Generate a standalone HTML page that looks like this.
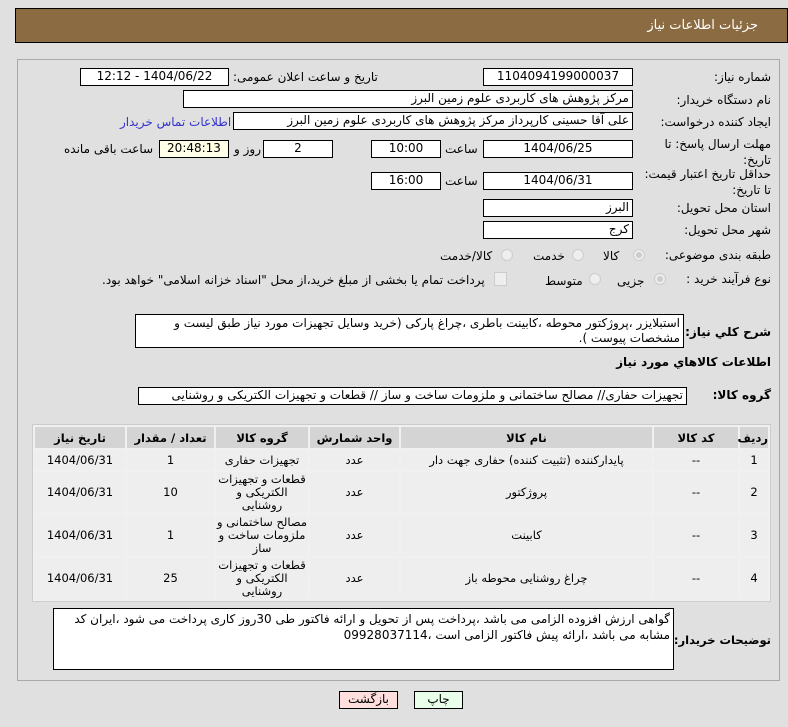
<!DOCTYPE html>
<html><head><meta charset="utf-8"><style>
body{margin:0;width:788px;height:727px;background:#e0e0e0;font-family:"DejaVu Sans","Liberation Sans",sans-serif;font-size:12px;color:#000;position:relative;overflow:hidden}
.a{position:absolute;white-space:nowrap;direction:rtl;font-size:12px}
.b{position:absolute;background:#fff;border:1px solid #000;box-sizing:border-box;direction:rtl;font-size:12px;line-height:15px;padding:0 3px;white-space:nowrap;overflow:hidden}
.c{text-align:center}
.r{position:absolute;width:12px;height:12px;border-radius:50%;background:#eee;border:1px solid #ccc;box-sizing:border-box}
.r.on::after{content:"";position:absolute;left:2px;top:2px;width:6px;height:6px;border-radius:50%;background:#ccc}
table{position:absolute;left:32px;top:424px;width:739px;border-collapse:separate;border-spacing:2px;direction:rtl;font-size:11.5px;background:#f0f0f0;border:1px solid #ccc;table-layout:fixed}
th{background:#d4d4d4;height:21px;font-weight:bold;padding:0}
td{background:#eeeeee;text-align:center;line-height:13px;padding:0}
</style></head><body>
<div style="position:absolute;left:15px;top:8px;width:773px;height:35px;background:#8b6b42;border:1px solid #000;box-sizing:border-box"></div>
<div class="a" style="right:30px;top:18px;color:#fff;font-size:13px">جزئیات اطلاعات نیاز</div>
<div style="position:absolute;left:17px;top:59px;width:763px;height:622px;border:1px solid #a8a8a8;box-sizing:border-box"></div>

<div class="a" style="right:17px;top:70px">شماره نیاز:</div>
<div class="b c" style="left:483px;top:68px;width:150px;height:18px">1104094199000037</div>
<div class="a" style="left:233px;top:70px">تاریخ و ساعت اعلان عمومی:</div>
<div class="b c" style="left:80px;top:68px;width:149px;height:18px">1404/06/22 - 12:12</div>

<div class="a" style="right:17px;top:93px">نام دستگاه خریدار:</div>
<div class="b" style="left:183px;top:90px;width:450px;height:18px">مرکز پژوهش های کاربردی علوم زمین البرز</div>

<div class="a" style="right:17px;top:115px">ایجاد کننده درخواست:</div>
<div class="b" style="left:233px;top:112px;width:400px;height:18px">علی آقا حسینی کارپرداز مرکز پژوهش های کاربردی علوم زمین البرز</div>
<div class="a" style="left:120px;top:115px;color:#3333cc">اطلاعات تماس خریدار</div>

<div class="a" style="right:17px;top:136px;line-height:16px;text-align:right">مهلت ارسال پاسخ: تا<br>تاریخ:</div>
<div class="b c" style="left:483px;top:140px;width:150px;height:18px">1404/06/25</div>
<div class="a" style="left:445px;top:142px">ساعت</div>
<div class="b c" style="left:371px;top:140px;width:70px;height:18px">10:00</div>
<div class="b c" style="left:263px;top:140px;width:70px;height:18px">2</div>
<div class="a" style="left:234px;top:142px">روز و</div>
<div class="b c" style="left:159px;top:140px;width:70px;height:18px;background:#ffffe8">20:48:13</div>
<div class="a" style="left:64px;top:142px">ساعت باقی مانده</div>

<div class="a" style="right:17px;top:166px;line-height:16px;text-align:right">حداقل تاریخ اعتبار قیمت:<br>تا تاریخ:</div>
<div class="b c" style="left:483px;top:172px;width:150px;height:18px">1404/06/31</div>
<div class="a" style="left:445px;top:174px">ساعت</div>
<div class="b c" style="left:371px;top:172px;width:70px;height:18px">16:00</div>

<div class="a" style="right:17px;top:201px">استان محل تحویل:</div>
<div class="b" style="left:483px;top:199px;width:150px;height:18px">البرز</div>
<div class="a" style="right:17px;top:223px">شهر محل تحویل:</div>
<div class="b" style="left:483px;top:221px;width:150px;height:18px">کرج</div>

<div class="a" style="right:17px;top:248px">طبقه بندی موضوعی:</div>
<div class="r on" style="left:633px;top:249px"></div><div class="a" style="left:603px;top:249px">کالا</div>
<div class="r" style="left:572px;top:249px"></div><div class="a" style="left:533px;top:249px">خدمت</div>
<div class="r" style="left:501px;top:249px"></div><div class="a" style="left:440px;top:249px">کالا/خدمت</div>

<div class="a" style="right:17px;top:272px">نوع فرآیند خرید :</div>
<div class="r on" style="left:654px;top:273px"></div><div class="a" style="left:617px;top:274px">جزیی</div>
<div class="r" style="left:589px;top:273px"></div><div class="a" style="left:545px;top:274px">متوسط</div>
<div style="position:absolute;left:494px;top:272px;width:11px;height:12px;background:#eee;border:1px solid #ccc"></div>
<div class="a" style="left:102px;top:273px">پرداخت تمام یا بخشی از مبلغ خرید،از محل "اسناد خزانه اسلامی" خواهد بود.</div>

<div class="a" style="right:17px;top:325px;font-weight:bold">شرح کلي نياز:</div>
<div class="b" style="left:135px;top:314px;width:549px;height:34px;white-space:normal;line-height:15px;padding-top:1px">استبلایزر ،پروژکتور محوطه ،کابینت باطری ،چراغ پارکی (خرید وسایل تجهیزات مورد نیاز طبق لیست و مشخصات پیوست ).</div>
<div class="a" style="right:17px;top:355px;font-weight:bold">اطلاعات کالاهاي مورد نياز</div>

<div class="a" style="right:17px;top:388px;font-weight:bold">گروه کالا:</div>
<div class="b" style="left:138px;top:387px;width:549px;height:18px">تجهیزات حفاری// مصالح ساختمانی و ملزومات ساخت و ساز // قطعات و تجهیزات الکتریکی و روشنایی</div>

<table>
<colgroup><col style="width:28px"><col style="width:84px"><col style="width:251px"><col style="width:89px"><col style="width:92px"><col style="width:87px"><col></colgroup>
<tr><th>ردیف</th><th>کد کالا</th><th>نام کالا</th><th>واحد شمارش</th><th>گروه کالا</th><th>تعداد / مقدار</th><th>تاریخ نیاز</th></tr>
<tr style="height:20px"><td>1</td><td>--</td><td>پایدارکننده (تثبیت کننده) حفاری جهت دار</td><td>عدد</td><td>تجهیزات حفاری</td><td>1</td><td>1404/06/31</td></tr>
<tr style="height:41px"><td>2</td><td>--</td><td>پروژکتور</td><td>عدد</td><td>قطعات و تجهیزات الکتریکی و روشنایی</td><td>10</td><td>1404/06/31</td></tr>
<tr style="height:41px"><td>3</td><td>--</td><td>کابینت</td><td>عدد</td><td>مصالح ساختمانی و ملزومات ساخت و ساز</td><td>1</td><td>1404/06/31</td></tr>
<tr style="height:41px"><td>4</td><td>--</td><td>چراغ روشنایی محوطه باز</td><td>عدد</td><td>قطعات و تجهیزات الکتریکی و روشنایی</td><td>25</td><td>1404/06/31</td></tr>
</table>

<div class="a" style="right:17px;top:633px;font-weight:bold;font-size:11.5px">توضیحات خریدار:</div>
<div class="b" style="left:53px;top:608px;width:621px;height:62px;white-space:normal;line-height:16px;padding-top:2px">گواهی ارزش افزوده الزامی می باشد ،پرداخت پس از تحویل  و ارائه فاکتور طی 30روز کاری پرداخت می شود ،ایران کد مشابه می باشد ،ارائه پیش فاکتور الزامی است ،09928037114</div>

<div class="b c" style="left:339px;top:691px;width:59px;height:18px;background:#ffdede">بازگشت</div>
<div class="b c" style="left:414px;top:691px;width:49px;height:18px;background:#eaffea">چاپ</div>
</body></html>
